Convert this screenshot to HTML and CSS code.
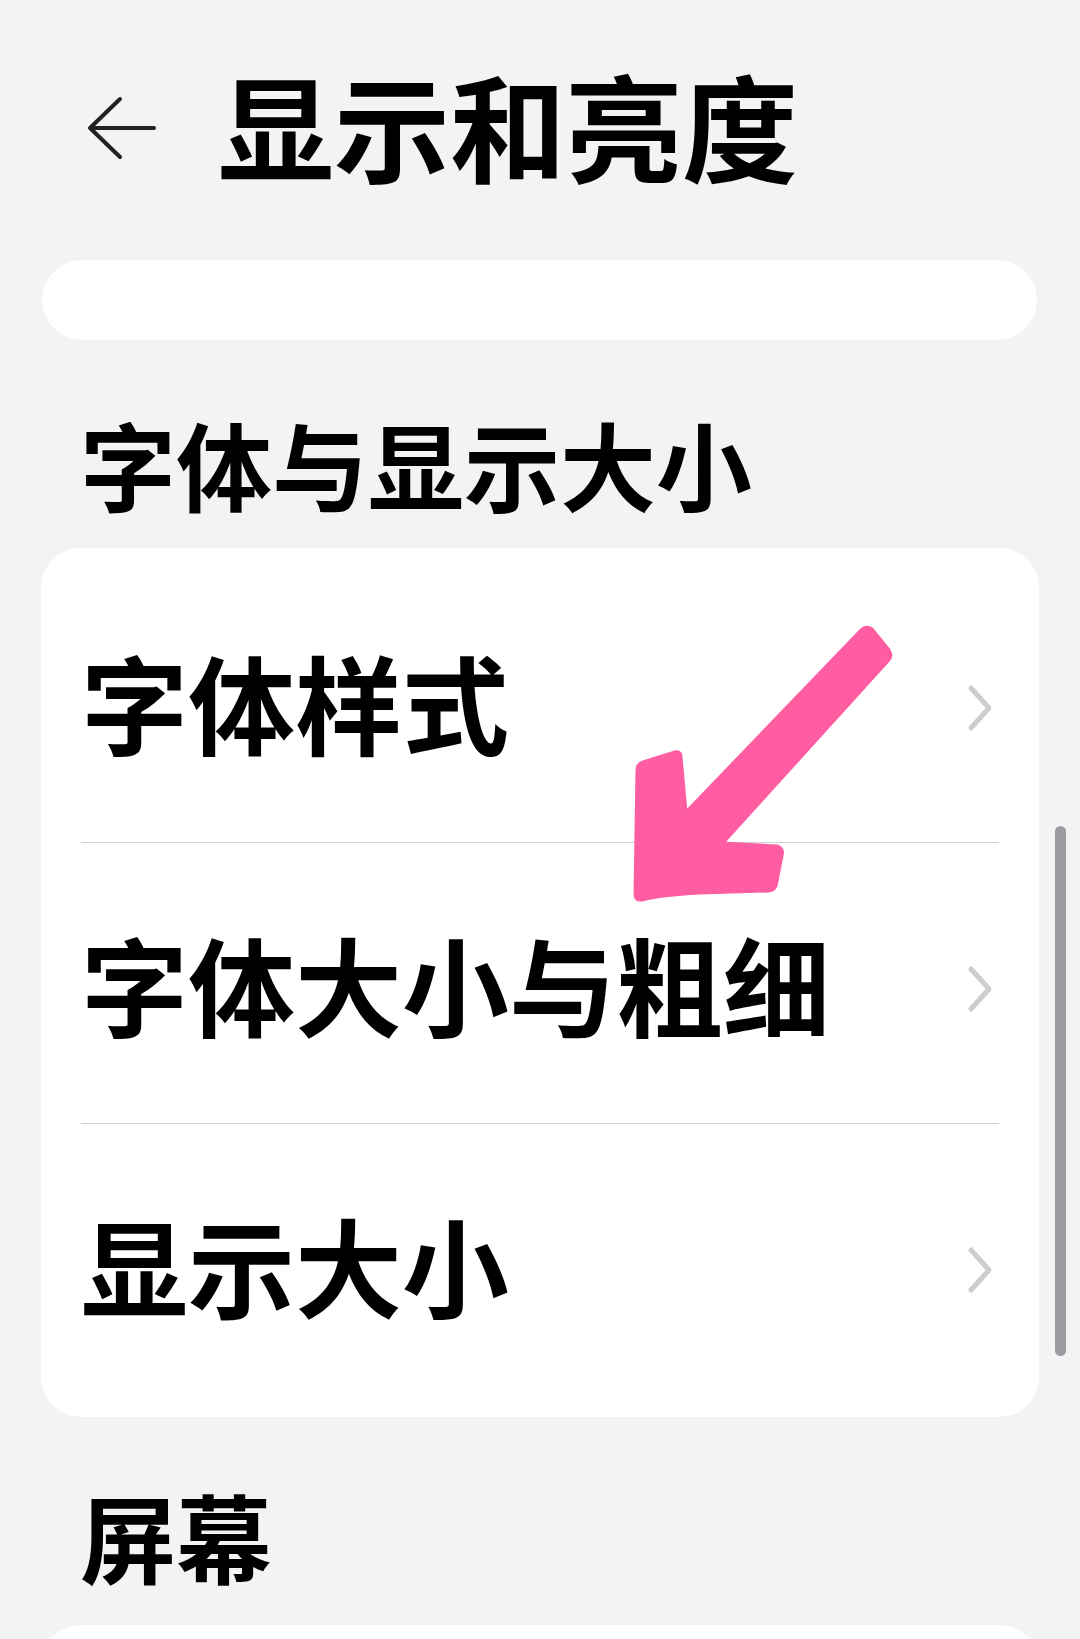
FILE: index.html
```html
<html>
<head>
<meta charset="utf-8">
<link rel="stylesheet" href="styles.css">
</head>
<body>
<div class="screen">

<div class="topbar">
  <svg class="back" viewBox="87 92 70 64" width="70" height="64">
    <path d="M120 95 L90 124 L120 153 M90 124 L154 124" fill="none" stroke="#222" stroke-width="4" stroke-linecap="round" stroke-linejoin="round"/>
  </svg>
  <h1 class="title">显示和亮度</h1>
</div>

<div class="search-pill"></div>

<h2 class="group-title">字体与显示大小</h2>
<div class="card">
  <div class="row">
    <span class="label">字体样式</span>
    <svg class="chev" viewBox="0 0 28 48" width="28" height="48"><path d="M5 4 L23 24 L5 44" fill="none" stroke="#cdcdcd" stroke-width="5" stroke-linecap="round" stroke-linejoin="round"/></svg>
  </div>
  <div class="divider"></div>
  <div class="row">
    <span class="label">字体大小与粗细</span>
    <svg class="chev" viewBox="0 0 28 48" width="28" height="48"><path d="M5 4 L23 24 L5 44" fill="none" stroke="#cdcdcd" stroke-width="5" stroke-linecap="round" stroke-linejoin="round"/></svg>
  </div>
  <div class="divider"></div>
  <div class="row">
    <span class="label">显示大小</span>
    <svg class="chev" viewBox="0 0 28 48" width="28" height="48"><path d="M5 4 L23 24 L5 44" fill="none" stroke="#cdcdcd" stroke-width="5" stroke-linecap="round" stroke-linejoin="round"/></svg>
  </div>
</div>

<h2 class="group-title later">屏幕</h2>
<div class="card card-next"></div>

<!-- hand drawn pointer over the list -->
<svg class="pointer" viewBox="620 610 290 300" width="290" height="300">
  <path d="M861 630 Q866 625 872 629 L889 650 Q893 656 888 661 L723 843 L777 846 Q784 848 782 856 L776 886 Q774 891 768 891 L700 893 Q660 895 642 900 Q635 901 635 894 L637 770 Q637 764 643 762 L675 752 Q681 751 681 757 L686 812 Z" fill="#fe5da2" stroke="#fe5da2" stroke-width="3" stroke-linejoin="round"/>
</svg>

<div class="scrollbar"></div>

</div>
</body>
</html>
```

FILE: styles.css
```css
body {margin: 0; background-color: #f2f3f5; color: #000000;}
body, h1, h2 {font-family: "Noto Sans CJK SC", "Noto Sans", sans-serif;}
.screen {position: relative; width: 1080px; height: 1639px; overflow: hidden;}

.topbar {display: flex; align-items: center; height: 256px; padding-left: 87px; box-sizing: border-box;}
.back {display: block; flex: none;}
.title {margin: -9px 0 0 61px; font-size: 116px; font-weight: 700; line-height: 1.2;}

.search-pill {height: 80px; margin: 4px 43px 0 42px; background-color: #ffffff; border-radius: 40px;}

.group-title {margin: 65px 0 0 0; padding-left: 80px; font-size: 96px; font-weight: 700; line-height: 115px; height: 143px;}
.group-title.later {margin-top: 60px; height: 148px;}

.card {margin: 0 41px; padding: 13px 0; background-color: #ffffff; border-radius: 40px;}
.card-next {height: 200px;}
.row {display: flex; align-items: center; justify-content: space-between; height: 280px; padding: 0 45px 0 40px; box-sizing: border-box;}
.row:first-child {height: 281px;}
.label {font-size: 107px; font-weight: 700; line-height: 1.2;}
.chev {display: block; flex: none; margin-top: 12px;}
.divider {height: 1px; margin: 0 40px; background-color: #d2d2d6;}

.pointer {position: absolute; left: 620px; top: 610px;}
.scrollbar {position: absolute; left: 1055px; top: 826px; width: 11px; height: 530px; border-radius: 6px; background-color: #9c9ca0;}
```
